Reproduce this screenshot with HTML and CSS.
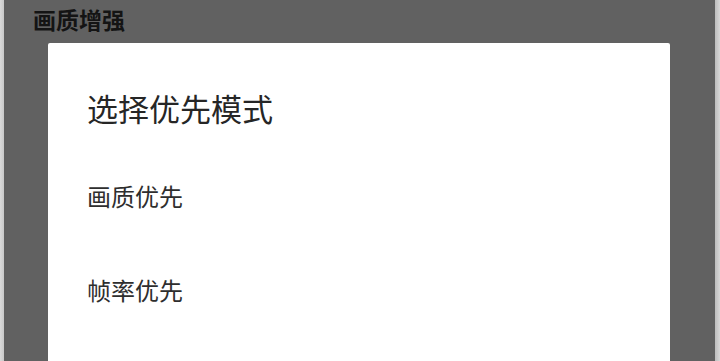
FILE: index.html
```html
<!DOCTYPE html>
<html lang="zh-CN">
<head>
  <meta charset="UTF-8">
  <meta name="viewport" content="width=device-width, initial-scale=1">
  <title>画质增强</title>
  <link rel="stylesheet" href="styles.css">
</head>
<body>
  <div class="screen">
    <div class="edge edge-left"></div>
    <div class="page">
      <h2 class="page-title">画质增强</h2>
      <!-- 选择模式对话框 -->
      <div class="dialog">
        <h3 class="dialog-title">选择优先模式</h3>
        <ul class="options">
          <li class="option">画质优先</li>
          <li class="option">帧率优先</li>
        </ul>
      </div>
    </div>
    <div class="edge edge-right"></div>
  </div>
</body>
</html>
```

FILE: styles.css
```css
* {
  box-sizing: border-box;
}

html, body {
  margin: 0;
  height: 100%;
  overflow: hidden;
}

body {
  font-family: "Noto Sans CJK SC", "Noto Sans", sans-serif;
  background: #d6d6d6;
}

.screen {
  display: flex;
  height: 361px;
}

.edge {
  background: linear-gradient(to right, #dadada, #c8c8c8);
}

.edge-left {
  width: 4px;
}

.edge-right {
  width: 5px;
  background: linear-gradient(to right, #bdbdbd, #d8d8d8);
}

.page {
  flex: 1;
  background: #616161;
  padding-left: 44px;
  overflow: hidden;
}

.page-title {
  margin: 5px 0 0 -15px;
  font-size: 23px;
  line-height: 29px;
  font-weight: bold;
  color: #141414;
}

.dialog {
  width: 622px;
  height: 400px;
  margin-top: 9px;
  background: #fff;
  border-radius: 2px;
}

.dialog-title {
  margin: 0;
  padding: 46px 0 0 39px;
  font-size: 31px;
  line-height: 37px;
  font-weight: normal;
  color: #262626;
}

.options {
  list-style: none;
  margin: 23px 0 0;
  padding: 0;
}

.option {
  padding-left: 39px;
  height: 94px;
  line-height: 94px;
  font-size: 24px;
  color: #2e2e2e;
}
```
